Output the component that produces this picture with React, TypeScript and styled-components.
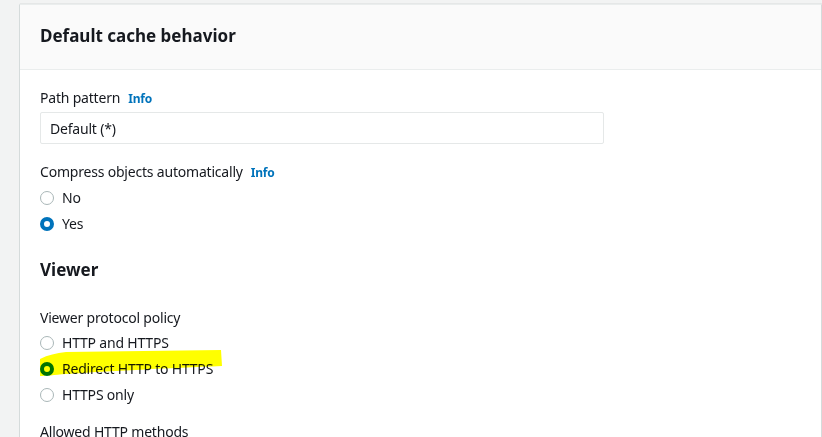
import styled, { createGlobalStyle } from 'styled-components'

const GlobalStyle = createGlobalStyle`
  html, body {
    margin: 0;
    padding: 0;
    background: #f2f3f3;
    font-family: "Noto Sans", "Open Sans", Arial, sans-serif;
    color: #16191f;
  }
`

const Page = styled.div`
  padding: 4px 0 0 19px;
  height: 437px;
  box-sizing: border-box;
  overflow: hidden;
`

// the white container, open at the bottom
const Card = styled.div`
  position: relative;
  width: 801px;
  min-height: 460px;
  background: #fff;
  border-top: 1px solid #eaeded;
  border-left: 1px solid #d5dbdb;
  border-right: 1px solid #d5dbdb;
  box-shadow: 1px 0 1px rgba(0, 28, 36, 0.3);
`

const CardHeader = styled.div`
  height: 65px;
  box-sizing: border-box;
  display: flex;
  align-items: center;
  padding: 0 20px 2px;
  background: #fafafa;
  border-bottom: 1px solid #eaeded;
`

const Title = styled.h2`
  margin: 0;
  font-size: 17px;
  font-weight: 700;
  line-height: 24px;
`

const CardBody = styled.div`
  padding: 17px 20px 20px;
  display: flex;
  flex-direction: column;
  letter-spacing: -0.2px;
`

const Label = styled.div<{ $top?: number }>`
  margin-top: ${p => p.$top ?? 0}px;
  font-size: 14px;
  line-height: 22px;
  display: flex;
  align-items: baseline;
  gap: 8px;
`

const Info = styled.a`
  font-size: 12px;
  font-weight: 700;
  color: #0073bb;
  text-decoration: none;
`

const TextInput = styled.div`
  margin-top: 2px;
  width: 564px;
  height: 32px;
  box-sizing: border-box;
  border: 1px solid #e5e8e8;
  border-radius: 2px;
  padding: 0 9px;
  display: flex;
  align-items: center;
  font-size: 14px;
`

const Section = styled.h3`
  margin: 23px 0 0;
  font-size: 17px;
  font-weight: 700;
  line-height: 24px;
  letter-spacing: 0;
`

const RadioList = styled.div`
  margin-top: 3px;
  display: flex;
  flex-direction: column;
  gap: 4px;
`

const RadioRow = styled.label`
  display: flex;
  align-items: center;
  gap: 8px;
  font-size: 14px;
  line-height: 22px;
`

const Dot = styled.span<{ $on?: boolean }>`
  width: 14px;
  height: 14px;
  box-sizing: border-box;
  border-radius: 50%;
  background: #fff;
  border: ${p => (p.$on ? '4px solid #0073bb' : '1px solid #aab7b8')};
`

const Highlight = styled.svg`
  position: absolute;
  left: 20px;
  top: 345px;
  mix-blend-mode: multiply;
  pointer-events: none;
`

const Radio = ({ label, on }: { label: string; on?: boolean }) => (
  <RadioRow>
    <Dot $on={on} />
    {label}
  </RadioRow>
)

export default function App() {
  return (
    <Page>
      <GlobalStyle />
      <Card>
        <CardHeader>
          <Title>Default cache behavior</Title>
        </CardHeader>
        <CardBody>
          <Label>
            Path pattern <Info>Info</Info>
          </Label>
          <TextInput>Default (*)</TextInput>

          <Label $top={17}>
            Compress objects automatically <Info>Info</Info>
          </Label>
          <RadioList>
            <Radio label="No" />
            <Radio label="Yes" on />
          </RadioList>

          <Section>Viewer</Section>

          <Label $top={25}>Viewer protocol policy</Label>
          <RadioList>
            <Radio label="HTTP and HTTPS" />
            <Radio label="Redirect HTTP to HTTPS" on />
            <Radio label="HTTPS only" />
          </RadioList>

          <Label $top={15}>Allowed HTTP methods</Label>
        </CardBody>
        <Highlight width="182" height="28" viewBox="0 0 182 28">
          <path
            d="M0 9 C 8 5, 16 3, 26 2 L 181 0 L 182 16 C 130 18, 70 21, 26 24 C 14 25, 6 26, 0 26 Z"
            fill="#ffff00"
          />
        </Highlight>
      </Card>
    </Page>
  )
}
